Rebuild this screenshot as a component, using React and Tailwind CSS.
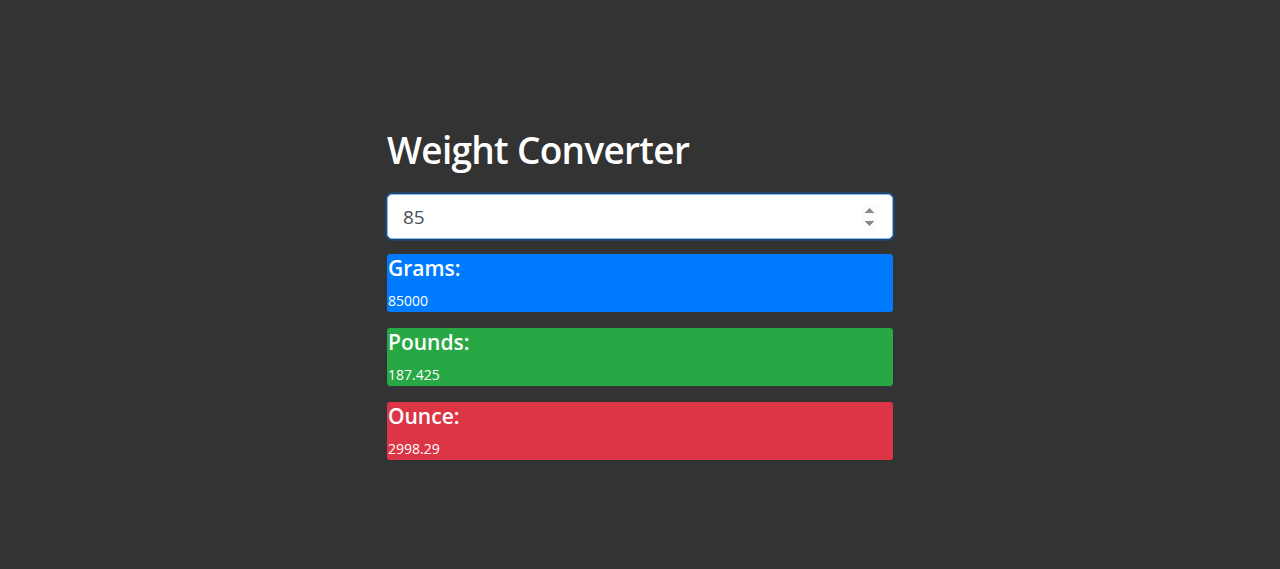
import React, { useState } from 'react';

const results = [
  { label: 'Grams:', key: 'g', color: 'bg-[#007bff]' },
  { label: 'Pounds:', key: 'lb', color: 'bg-[#28a745]' },
  { label: 'Ounce:', key: 'oz', color: 'bg-[#dc3545]' },
];

export default function App() {
  const [value, setValue] = useState('85');
  const n = parseFloat(value) || 0;
  const out = {
    g: +(n * 1000).toFixed(2),
    lb: +(n * 2.205).toFixed(3),
    oz: +(n * 35.274).toFixed(2),
  };

  return (
    <div className="min-h-[569px] bg-[#333333] font-['Open_Sans','Liberation_Sans',sans-serif] text-white">
      <div className="mx-auto w-[506px] pt-[121px]">
        <h1 className="mb-[15px] text-[37px] font-semibold leading-[58px] tracking-[-0.7px]">Weight Converter</h1>
        <input
          type="number"
          value={value}
          onChange={e => setValue(e.target.value)}
          autoFocus
          className="block h-[45px] w-full rounded-[5px] border border-[#80bdff] bg-white px-[15px] text-[19px] text-[#495057] shadow-[0_0_0_2px_rgba(0,123,255,0.25)] outline-none"
        />
        <div className="mt-[15px] flex flex-col gap-[16px]">
          {results.map(r => (
            <div key={r.key} className={`${r.color} h-[58px] rounded-[3px] px-px`}>
              <div className="text-[21px] font-semibold leading-[28px]">{r.label}</div>
              <div className="mt-[9px] text-[14px] leading-[20px]">{out[r.key]}</div>
            </div>
          ))}
        </div>
      </div>
    </div>
  );
}
